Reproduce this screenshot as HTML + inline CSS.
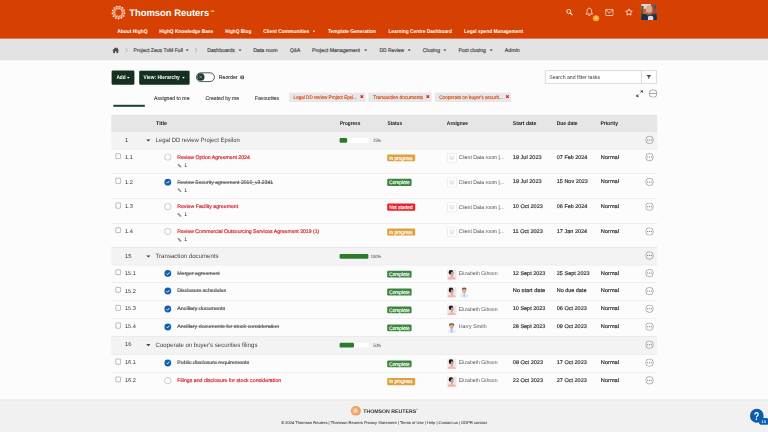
<!DOCTYPE html>
<html lang="en"><head><meta charset="utf-8"><title>Tasks - Project Zeus</title>
<style>
html,body{margin:0;padding:0;width:768px;height:432px;overflow:hidden;background:#FCFCFC;}
#pg{position:absolute;left:0;top:0;width:1920px;height:1080px;transform:scale(0.4);transform-origin:0 0;font-family:"Liberation Sans", sans-serif;overflow:hidden;text-rendering:geometricPrecision;}
#pg div,#pg span,#pg svg{position:absolute;box-sizing:border-box;}
#pg span{white-space:nowrap;}
#pg s{text-decoration:line-through;}
</style></head><body><div id="pg">
<div style="left:0.0px;top:0.0px;width:1920.0px;height:97.25px;background:#D64000;"></div>
<svg width="1920" height="1080" style="left:0;top:0;" fill="#fff"><circle cx="296.25" cy="31.25" r="11.65" fill="none" stroke="#fff" stroke-width="8.82" opacity="0.38"/><circle cx="311.92" cy="32.82" r="1.8"/><circle cx="309.4" cy="39.93" r="1.8"/><circle cx="303.86" cy="45.04" r="1.8"/><circle cx="296.58" cy="47.0" r="1.8"/><circle cx="289.22" cy="45.35" r="1.8"/><circle cx="283.48" cy="40.47" r="1.8"/><circle cx="280.66" cy="33.47" r="1.8"/><circle cx="281.41" cy="25.97" r="1.8"/><circle cx="285.56" cy="19.68" r="1.8"/><circle cx="292.16" cy="16.04" r="1.8"/><circle cx="299.7" cy="15.88" r="1.8"/><circle cx="306.45" cy="19.25" r="1.8"/><circle cx="310.86" cy="25.36" r="1.8"/><circle cx="306.78" cy="34.51" r="1.25"/><circle cx="303.35" cy="39.69" r="1.25"/><circle cx="297.66" cy="42.18" r="1.25"/><circle cx="291.53" cy="41.21" r="1.25"/><circle cx="286.89" cy="37.08" r="1.25"/><circle cx="285.23" cy="31.09" r="1.25"/><circle cx="287.06" cy="25.16" r="1.25"/><circle cx="291.81" cy="21.16" r="1.25"/><circle cx="297.98" cy="20.36" r="1.25"/><circle cx="303.59" cy="23.02" r="1.25"/><circle cx="306.87" cy="28.3" r="1.25"/></svg>
<span style="left:323.25px;top:18.85px;font-size:24.0px;line-height:28.8px;font-weight:700;color:#fff;transform:scaleX(0.9802);transform-origin:0 50%;">Thomson Reuters</span>
<span style="left:526.25px;top:27.2px;font-size:5.5px;line-height:6.6px;font-weight:700;color:#fff;transform:scaleX(1.1316);transform-origin:0 50%;">TM</span>
<span style="left:293.0px;top:69.8px;font-size:13.25px;line-height:15.9px;font-weight:700;color:#fff;transform:scaleX(0.9273);transform-origin:0 50%;">About HighQ</span>
<span style="left:398.25px;top:69.8px;font-size:13.25px;line-height:15.9px;font-weight:700;color:#fff;transform:scaleX(0.9033);transform-origin:0 50%;">HighQ Knowledge Base</span>
<span style="left:562.5px;top:69.8px;font-size:13.25px;line-height:15.9px;font-weight:700;color:#fff;transform:scaleX(0.8988);transform-origin:0 50%;">HighQ Blog</span>
<span style="left:658.0px;top:69.8px;font-size:13.25px;line-height:15.9px;font-weight:700;color:#fff;transform:scaleX(0.9243);transform-origin:0 50%;">Client Communities</span>
<span style="left:819.5px;top:69.8px;font-size:13.25px;line-height:15.9px;font-weight:700;color:#fff;transform:scaleX(0.9173);transform-origin:0 50%;">Template Generation</span>
<span style="left:971.25px;top:69.8px;font-size:13.25px;line-height:15.9px;font-weight:700;color:#fff;transform:scaleX(0.9097);transform-origin:0 50%;">Learning Centre Dashboard</span>
<span style="left:1160.0px;top:69.8px;font-size:13.25px;line-height:15.9px;font-weight:700;color:#fff;transform:scaleX(0.9106);transform-origin:0 50%;">Legal spend Management</span>
<svg style="left:781.25px;top:75.75px;" width="8.0" height="5.0" viewBox="0 0 10 6"><path d="M0 0H10L5 6Z" fill="#fff"/></svg>
<svg style="left:1414.5px;top:21.5px;" width="17.5" height="17.0" viewBox="0 0 20 20"><circle cx="7.8" cy="7.8" r="5.9" fill="none" stroke="#fff" stroke-width="2.5"/><path d="M12.6 12.600L18 18" stroke="#fff" stroke-width="3.4" stroke-linecap="round"/></svg>
<svg style="left:1462.5px;top:18.0px;" width="20.5" height="23.0" viewBox="0 0 20 22"><path d="M10 2.2C6.3 2.2 4.6 5 4.6 8.6C4.6 13 3.4 14.6 1.6 16.4H18.4C16.6 14.6 15.4 13 15.4 8.6C15.4 5 13.7 2.2 10 2.2Z" fill="none" stroke="#fff" stroke-width="1.7" stroke-linejoin="round"/><path d="M7.8 18.4C8 19.8 9 20.4 10 20.4C11 20.4 12 19.8 12.2 18.4" fill="none" stroke="#fff" stroke-width="1.6"/><circle cx="10" cy="1.6" r="1.1" fill="#fff"/></svg>
<div style="left:1482.0px;top:37.5px;width:15.5px;height:15.5px;background:#F2A62E;border-radius:50%;"></div>
<span style="left:1488.0px;top:39.9px;font-size:8.5px;line-height:10.2px;font-weight:700;color:#fff;">3</span>
<svg style="left:1512.5px;top:21.5px;" width="21.0" height="18.0" viewBox="0 0 24 20"><rect x="1.2" y="1.2" width="21.6" height="17.6" rx="1.5" fill="none" stroke="#fff" stroke-width="2"/><path d="M1.5 2.5L12 11.5L22.5 2.5" fill="none" stroke="#fff" stroke-width="2"/></svg>
<svg style="left:1562.25px;top:19.75px;" width="21.0" height="20.5" viewBox="0 0 24 24"><path d="M12 2.5L14.9 8.7L21.6 9.5L16.7 14.1L18 20.8L12 17.5L6 20.8L7.3 14.1L2.4 9.5L9.1 8.7Z" fill="none" stroke="#fff" stroke-width="2.2" stroke-linejoin="round"/></svg>
<div style="left:1603.0px;top:10.25px;width:39.25px;height:39.5px;overflow:hidden;background:#8f5f4c;border-radius:1.25px;"><div style="left:0;top:0;width:62%;height:34%;background:#d6dadd;"></div><div style="left:0;top:12%;width:16%;height:56%;background:#4e5a42;"></div><div style="left:13%;top:30%;width:24%;height:38%;background:#cf632c;"></div><div style="left:70%;top:0;width:30%;height:68%;background:#9c4c36;"></div><div style="left:84%;top:8%;width:10%;height:22%;background:#5d4a48;"></div><div style="left:0%;top:62%;width:100%;height:40%;background:#27303f;"></div><div style="left:31%;top:7%;width:40%;height:68%;background:#d9ab92;border-radius:46% 46% 48% 48%;"></div><div style="left:35%;top:50%;width:33%;height:27%;background:#7a5646;border-radius:20% 20% 50% 50%;"></div><div style="left:42%;top:50%;width:18%;height:9%;background:#c99a84;"></div><div style="left:0%;top:72%;width:100%;height:32%;background:#1f2d4a;border-radius:45% 45% 0 0;"></div><div style="left:44%;top:76%;width:32%;height:26%;background:#d3dbe7;border-radius:30% 30% 0 0;"></div></div>
<div style="left:0.0px;top:97.25px;width:1920.0px;height:53.5px;background:#E3E3E3;"></div>
<svg style="left:279.5px;top:117.5px;" width="18.5" height="15.5" viewBox="0 0 22 19"><path d="M11 0.5L0.3 10.2H3.2V18.5H8.8V12.5H13.2V18.5H18.8V10.2H21.7L17.6 6.5V1.8H15V4.1Z" fill="#4a4a4a"/></svg>
<svg style="left:312.0px;top:117.5px;" width="7.5" height="14.5" viewBox="0 0 8 16"><path d="M1 1L7 8L1 15" fill="none" stroke="#8e8e8e" stroke-width="1.6"/></svg>
<span style="left:334.0px;top:117.05px;font-size:13.25px;line-height:15.9px;font-weight:400;color:#484848;-webkit-text-stroke:0.46px #484848;transform:scaleX(0.9583);transform-origin:0 50%;">Project Zeus TxM Full</span>
<svg style="left:463.75px;top:123.25px;" width="8.25" height="5.25" viewBox="0 0 10 6"><path d="M0 0H10L5 6Z" fill="#484848"/></svg>
<svg style="left:486.25px;top:117.5px;" width="7.5" height="14.5" viewBox="0 0 8 16"><path d="M1 1L7 8L1 15" fill="none" stroke="#8e8e8e" stroke-width="1.6"/></svg>
<span style="left:517.5px;top:117.05px;font-size:13.25px;line-height:15.9px;font-weight:400;color:#484848;-webkit-text-stroke:0.46px #484848;transform:scaleX(0.9692);transform-origin:0 50%;">Dashboards</span>
<svg style="left:595.5px;top:123.25px;" width="8.25" height="5.25" viewBox="0 0 10 6"><path d="M0 0H10L5 6Z" fill="#484848"/></svg>
<span style="left:633.0px;top:117.05px;font-size:13.25px;line-height:15.9px;font-weight:400;color:#484848;-webkit-text-stroke:0.46px #484848;transform:scaleX(0.9901);transform-origin:0 50%;">Data room</span>
<span style="left:724.5px;top:117.05px;font-size:13.25px;line-height:15.9px;font-weight:400;color:#484848;-webkit-text-stroke:0.46px #484848;transform:scaleX(0.9112);transform-origin:0 50%;">Q&amp;A</span>
<span style="left:780.0px;top:117.05px;font-size:13.25px;line-height:15.9px;font-weight:400;color:#484848;-webkit-text-stroke:0.46px #484848;transform:scaleX(0.9815);transform-origin:0 50%;">Project Management</span>
<svg style="left:910.25px;top:123.25px;" width="8.25" height="5.25" viewBox="0 0 10 6"><path d="M0 0H10L5 6Z" fill="#484848"/></svg>
<span style="left:948.75px;top:117.05px;font-size:13.25px;line-height:15.9px;font-weight:400;color:#484848;-webkit-text-stroke:0.46px #484848;transform:scaleX(0.9205);transform-origin:0 50%;">DD Review</span>
<svg style="left:1018.75px;top:123.25px;" width="8.25" height="5.25" viewBox="0 0 10 6"><path d="M0 0H10L5 6Z" fill="#484848"/></svg>
<span style="left:1056.75px;top:117.05px;font-size:13.25px;line-height:15.9px;font-weight:400;color:#484848;-webkit-text-stroke:0.46px #484848;transform:scaleX(0.9728);transform-origin:0 50%;">Closing</span>
<svg style="left:1108.0px;top:123.25px;" width="8.25" height="5.25" viewBox="0 0 10 6"><path d="M0 0H10L5 6Z" fill="#484848"/></svg>
<span style="left:1146.25px;top:117.05px;font-size:13.25px;line-height:15.9px;font-weight:400;color:#484848;-webkit-text-stroke:0.46px #484848;transform:scaleX(0.9587);transform-origin:0 50%;">Post closing</span>
<svg style="left:1223.5px;top:123.25px;" width="8.25" height="5.25" viewBox="0 0 10 6"><path d="M0 0H10L5 6Z" fill="#484848"/></svg>
<span style="left:1262.0px;top:117.05px;font-size:13.25px;line-height:15.9px;font-weight:400;color:#484848;-webkit-text-stroke:0.46px #484848;transform:scaleX(0.9983);transform-origin:0 50%;">Admin</span>
<div style="left:278.75px;top:175.62px;width:57.5px;height:36.25px;background:#14301F;border-radius:3.25px;"></div>
<span style="left:290.5px;top:185.75px;font-size:13.75px;line-height:16.5px;font-weight:700;color:#fff;transform:scaleX(0.8697);transform-origin:0 50%;">Add</span>
<svg style="left:317.0px;top:192.25px;" width="7.5" height="4.75" viewBox="0 0 10 6"><path d="M0 0H10L5 6Z" fill="#fff"/></svg>
<div style="left:347.5px;top:175.62px;width:126.0px;height:36.25px;background:#14301F;border-radius:3.25px;"></div>
<span style="left:359.0px;top:185.75px;font-size:13.75px;line-height:16.5px;font-weight:700;color:#fff;transform:scaleX(0.8792);transform-origin:0 50%;">View: Hierarchy</span>
<svg style="left:454.75px;top:192.25px;" width="7.5" height="4.75" viewBox="0 0 10 6"><path d="M0 0H10L5 6Z" fill="#fff"/></svg>
<div style="left:490.0px;top:180.5px;width:46.5px;height:24.25px;border:2.75px solid #1c3a2a;border-radius:12.5px;background:#fff;"></div>
<div style="left:492.5px;top:183.25px;width:18.75px;height:18.75px;background:#1c3a2a;border-radius:50%;"></div>
<svg style="left:496.38px;top:187.12px;" width="11.0" height="11.0" viewBox="0 0 10 10"><path d="M1.5 1.5L8.5 8.5M8.5 1.5L1.5 8.5" stroke="#b9c7bf" stroke-width="1.5"/></svg>
<span style="left:546.88px;top:184.85px;font-size:14.0px;line-height:16.8px;font-weight:400;color:#2a2a2a;-webkit-text-stroke:0.25px #2a2a2a;transform:scaleX(0.929);transform-origin:0 50%;">Reorder</span>
<svg style="left:599.75px;top:188.0px;" width="11.0" height="11.0" viewBox="0 0 10 10"><circle cx="5" cy="5" r="4.7" fill="#5a5a5a"/><text x="5" y="8" font-size="8" font-weight="700" text-anchor="middle" fill="#fff" font-family="Liberation Sans, sans-serif">?</text></svg>
<div style="left:1363.25px;top:175.75px;width:278.5px;height:33.5px;border:1.38px solid #a6a6a6;border-radius:1.5px;background:#fff;"></div>
<div style="left:1602.75px;top:175.75px;width:1.38px;height:33.5px;background:#a6a6a6;"></div>
<span style="left:1372.5px;top:185.75px;font-size:13.75px;line-height:16.5px;font-weight:400;color:#3c3c3c;transform:scaleX(0.9372);transform-origin:0 50%;">Search and filter tasks</span>
<svg style="left:1615.75px;top:186.25px;" width="12.0" height="12.5" viewBox="0 0 12 12"><path d="M0.5 1H11.5V2.6L7.4 6V11.5L4.6 10V6L0.5 2.6Z" fill="#4a4a4a"/></svg>
<span style="left:293.75px;top:237.15px;font-size:13.5px;line-height:16.2px;font-weight:400;color:#f7f7f7;transform:scaleX(0.9947);transform-origin:0 50%;">All tasks</span>
<div style="left:283.25px;top:262.0px;width:78.5px;height:4.5px;background:#1d4231;"></div>
<span style="left:385.0px;top:237.0px;font-size:13.75px;line-height:16.5px;font-weight:400;color:#333;-webkit-text-stroke:0.25px #333;transform:scaleX(0.9364);transform-origin:0 50%;">Assigned to me</span>
<span style="left:514.25px;top:237.0px;font-size:13.75px;line-height:16.5px;font-weight:400;color:#333;-webkit-text-stroke:0.25px #333;transform:scaleX(0.9258);transform-origin:0 50%;">Created by me</span>
<span style="left:637.0px;top:237.0px;font-size:13.75px;line-height:16.5px;font-weight:400;color:#333;-webkit-text-stroke:0.25px #333;transform:scaleX(0.9462);transform-origin:0 50%;">Favourites</span>
<div style="left:723.25px;top:230.75px;width:190.5px;height:23.75px;background:#E7E7E7;border-radius:2.5px;"></div>
<span style="left:733.75px;top:237.0px;font-size:12.5px;line-height:15.0px;font-weight:400;color:#D6501E;-webkit-text-stroke:0.44px #D6501E;transform:scaleX(0.9185);transform-origin:0 50%;">Legal DD review Project Epsi...</span>
<svg style="left:899.75px;top:237.0px;" width="9.25" height="9.25" viewBox="0 0 10 10"><path d="M1.5 1.5L8.5 8.5M8.5 1.5L1.5 8.5" stroke="#DC1F26" stroke-width="3.2"/></svg>
<div style="left:921.0px;top:230.75px;width:158.0px;height:23.75px;background:#E7E7E7;border-radius:2.5px;"></div>
<span style="left:932.75px;top:237.0px;font-size:12.5px;line-height:15.0px;font-weight:400;color:#D6501E;-webkit-text-stroke:0.44px #D6501E;transform:scaleX(0.9655);transform-origin:0 50%;">Transaction documents</span>
<svg style="left:1064.5px;top:237.0px;" width="9.25" height="9.25" viewBox="0 0 10 10"><path d="M1.5 1.5L8.5 8.5M8.5 1.5L1.5 8.5" stroke="#DC1F26" stroke-width="3.2"/></svg>
<div style="left:1086.75px;top:230.75px;width:191.25px;height:23.75px;background:#E7E7E7;border-radius:2.5px;"></div>
<span style="left:1097.5px;top:237.0px;font-size:12.5px;line-height:15.0px;font-weight:400;color:#D6501E;-webkit-text-stroke:0.44px #D6501E;transform:scaleX(0.9347);transform-origin:0 50%;">Cooperate on buyer&#x27;s securit...</span>
<svg style="left:1263.5px;top:237.0px;" width="9.25" height="9.25" viewBox="0 0 10 10"><path d="M1.5 1.5L8.5 8.5M8.5 1.5L1.5 8.5" stroke="#DC1F26" stroke-width="3.2"/></svg>
<svg style="left:1590.0px;top:225.0px;" width="18.0" height="18.0" viewBox="0 0 18 18"><path d="M16 2L11 7M2 16L7 11" fill="none" stroke="#333" stroke-width="1.8"/><path d="M17 1V7.6L10.4 1ZM1 17V10.4L7.600 17Z" fill="#333"/></svg>
<svg style="left:1621.75px;top:222.75px;" width="21.5" height="21.5" viewBox="0 0 20 20"><circle cx="10" cy="10" r="9.1" fill="none" stroke="#5e5e5e" stroke-width="1.25"/><path d="M1.5 10H18.5" stroke="#5e5e5e" stroke-width="1.3"/></svg>
<div style="left:278.25px;top:286.75px;width:1364.25px;height:43.0px;background:#E6E6E6;"></div>
<span style="left:389.5px;top:299.75px;font-size:13.75px;line-height:16.5px;font-weight:700;color:#222;transform:scaleX(0.981);transform-origin:0 50%;">Title</span>
<span style="left:849.5px;top:299.75px;font-size:13.75px;line-height:16.5px;font-weight:700;color:#222;transform:scaleX(0.8512);transform-origin:0 50%;">Progress</span>
<span style="left:968.5px;top:299.75px;font-size:13.75px;line-height:16.5px;font-weight:700;color:#222;transform:scaleX(0.8625);transform-origin:0 50%;">Status</span>
<span style="left:1117.25px;top:299.75px;font-size:13.75px;line-height:16.5px;font-weight:700;color:#222;transform:scaleX(0.8669);transform-origin:0 50%;">Assignee</span>
<span style="left:1281.5px;top:299.75px;font-size:13.75px;line-height:16.5px;font-weight:700;color:#222;transform:scaleX(0.9303);transform-origin:0 50%;">Start date</span>
<span style="left:1392.0px;top:299.75px;font-size:13.75px;line-height:16.5px;font-weight:700;color:#222;transform:scaleX(0.8953);transform-origin:0 50%;">Due date</span>
<span style="left:1501.25px;top:299.75px;font-size:13.75px;line-height:16.5px;font-weight:700;color:#222;transform:scaleX(0.914);transform-origin:0 50%;">Priority</span>
<div style="left:278.25px;top:329.75px;width:1364.25px;height:42.0px;background:#F3F3F3;"></div>
<div style="left:278.25px;top:371.88px;width:1364.25px;height:1.12px;background:#dcdcdc;"></div>
<span style="left:312.5px;top:341.8px;font-size:14.5px;line-height:17.4px;font-weight:400;color:#333;">1</span>
<svg style="left:364.5px;top:347.75px;" width="11.75" height="6.5" viewBox="0 0 10 6"><path d="M0 0H10L5 6Z" fill="#444"/></svg>
<span style="left:389.0px;top:342.08px;font-size:15.5px;line-height:18.6px;font-weight:400;color:#444;transform:scaleX(0.9507);transform-origin:0 50%;">Legal DD review Project Epsilon</span>
<div style="left:849.0px;top:345.12px;width:72.0px;height:11.75px;background:#fff;border-radius:3.25px;"></div>
<div style="left:849.0px;top:345.12px;width:18.72px;height:11.75px;background:#2B7B2C;border-radius:3.25px;"></div>
<span style="left:932.75px;top:344.45px;font-size:11.75px;line-height:14.1px;font-weight:400;color:#3c3c3c;transform:scaleX(0.8393);transform-origin:0 50%;">25%</span>
<svg style="left:1613.25px;top:338.5px;" width="21.5" height="21.5" viewBox="0 0 20 20"><circle cx="10" cy="10" r="8.8" fill="none" stroke="#646464" stroke-width="1.15"/><circle cx="5.8" cy="10" r="1.2" fill="#505050"/><circle cx="10" cy="10" r="1.2" fill="#505050"/><circle cx="14.2" cy="10" r="1.2" fill="#505050"/></svg>
<div style="left:278.25px;top:433.63px;width:1364.25px;height:1.12px;background:#dcdcdc;"></div>
<div style="left:288.5px;top:383.5px;width:13.25px;height:13.25px;border:1.55px solid #5a5a5a;border-radius:1.75px;background:#fff;"></div>
<span style="left:312.5px;top:384.35px;font-size:14.0px;line-height:16.8px;font-weight:400;color:#333;">1.1</span>
<div style="left:410.5px;top:384.25px;width:17.0px;height:17.0px;border:1.38px solid #7c7c7c;border-radius:50%;background:#fff;"></div>
<span style="left:442.5px;top:385.7px;font-size:13.0px;line-height:15.6px;font-weight:400;color:#D6252B;-webkit-text-stroke:0.46px #D6252B;transform:scaleX(0.9888);transform-origin:0 50%;">Review Option Agreement 2024</span>
<svg style="left:443.25px;top:408.5px;" width="11.25" height="10.75" viewBox="0 0 10 10"><path d="M2.2 2.2L7.6 7.6" stroke="#7c7c7c" stroke-width="3.5" stroke-linecap="round"/><path d="M2.6 2.6L7 7" stroke="#d8d8d8" stroke-width="1.0" stroke-linecap="round"/></svg>
<span style="left:460.75px;top:405.7px;font-size:13.0px;line-height:15.6px;font-weight:400;color:#333;">1</span>
<div style="left:968.0px;top:385.5px;width:69.5px;height:17.5px;background:#DFA03E;border-radius:3.0px;"></div>
<span style="left:973.25px;top:387.62px;font-size:12.5px;line-height:15.0px;font-weight:400;color:#fff;-webkit-text-stroke:0.44px #fff;transform:scaleX(0.9395);transform-origin:0 50%;">In progress</span>
<div style="left:1117.75px;top:382.5px;width:23.75px;height:23.5px;border:1.25px solid #d2d2d2;background:#fff;border-radius:1.5px;"><div style="left:24%;top:40%;width:52%;height:38%;background:#e6e6e6;border-radius:40% 40% 30% 30%;"></div><div style="left:20%;top:20%;width:22%;height:26%;background:#e6e6e6;border-radius:50%;"></div><div style="left:58%;top:20%;width:22%;height:26%;background:#e6e6e6;border-radius:50%;"></div></div>
<span style="left:1147.0px;top:385.8px;font-size:13.25px;line-height:15.9px;font-weight:400;color:#4c4c4c;transform:scaleX(0.9633);transform-origin:0 50%;">Client Data room [...</span>
<span style="left:1281.5px;top:384.65px;font-size:13.5px;line-height:16.2px;font-weight:400;color:#333;-webkit-text-stroke:0.47px #333;transform:scaleX(1.0313);transform-origin:0 50%;">19 Jul 2023</span>
<span style="left:1391.5px;top:384.65px;font-size:13.5px;line-height:16.2px;font-weight:400;color:#333;-webkit-text-stroke:0.47px #333;transform:scaleX(1.0091);transform-origin:0 50%;">07 Feb 2024</span>
<span style="left:1501.5px;top:384.65px;font-size:13.5px;line-height:16.2px;font-weight:400;color:#333;-webkit-text-stroke:0.47px #333;transform:scaleX(1.0456);transform-origin:0 50%;">Normal</span>
<svg style="left:1613.25px;top:382.0px;" width="21.5" height="21.5" viewBox="0 0 20 20"><circle cx="10" cy="10" r="8.8" fill="none" stroke="#646464" stroke-width="1.15"/><circle cx="5.8" cy="10" r="1.2" fill="#505050"/><circle cx="10" cy="10" r="1.2" fill="#505050"/><circle cx="14.2" cy="10" r="1.2" fill="#505050"/></svg>
<div style="left:278.25px;top:495.62px;width:1364.25px;height:1.12px;background:#dcdcdc;"></div>
<div style="left:288.5px;top:445.25px;width:13.25px;height:13.25px;border:1.55px solid #5a5a5a;border-radius:1.75px;background:#fff;"></div>
<span style="left:312.5px;top:446.1px;font-size:14.0px;line-height:16.8px;font-weight:400;color:#333;">1.2</span>
<div style="left:410.75px;top:446.5px;width:17.0px;height:17.0px;background:#1560AE;border-radius:50%;"></div>
<svg style="left:413.5px;top:449.25px;" width="11.5" height="11.5" viewBox="0 0 10 10"><path d="M1.8 5.2L4.1 7.500L8.4 2.800" fill="none" stroke="#fff" stroke-width="1.900"/></svg>
<span style="left:442.5px;top:447.45px;font-size:13.0px;line-height:15.6px;font-weight:400;color:#5a5a5a;text-decoration:line-through #505050;text-decoration-thickness:1.1px;-webkit-text-stroke:0.34px #5a5a5a;transform:scaleX(0.9797);transform-origin:0 50%;">Review Security agreement 2010_v3.2341</span>
<svg style="left:443.25px;top:470.25px;" width="11.25" height="10.75" viewBox="0 0 10 10"><path d="M2.2 2.2L7.6 7.6" stroke="#7c7c7c" stroke-width="3.5" stroke-linecap="round"/><path d="M2.6 2.6L7 7" stroke="#d8d8d8" stroke-width="1.0" stroke-linecap="round"/></svg>
<span style="left:460.75px;top:467.45px;font-size:13.0px;line-height:15.6px;font-weight:400;color:#333;">1</span>
<div style="left:968.0px;top:447.25px;width:61.25px;height:17.5px;background:#3B873D;border-radius:3.0px;"></div>
<span style="left:973.25px;top:449.38px;font-size:12.5px;line-height:15.0px;font-weight:400;color:#fff;-webkit-text-stroke:0.44px #fff;transform:scaleX(0.9533);transform-origin:0 50%;">Complete</span>
<div style="left:1117.75px;top:444.25px;width:23.75px;height:23.5px;border:1.25px solid #d2d2d2;background:#fff;border-radius:1.5px;"><div style="left:24%;top:40%;width:52%;height:38%;background:#e6e6e6;border-radius:40% 40% 30% 30%;"></div><div style="left:20%;top:20%;width:22%;height:26%;background:#e6e6e6;border-radius:50%;"></div><div style="left:58%;top:20%;width:22%;height:26%;background:#e6e6e6;border-radius:50%;"></div></div>
<span style="left:1147.0px;top:447.55px;font-size:13.25px;line-height:15.9px;font-weight:400;color:#4c4c4c;transform:scaleX(0.9633);transform-origin:0 50%;">Client Data room [...</span>
<span style="left:1281.5px;top:446.4px;font-size:13.5px;line-height:16.2px;font-weight:400;color:#333;-webkit-text-stroke:0.47px #333;transform:scaleX(1.0313);transform-origin:0 50%;">19 Jul 2023</span>
<span style="left:1391.5px;top:446.4px;font-size:13.5px;line-height:16.2px;font-weight:400;color:#333;-webkit-text-stroke:0.47px #333;transform:scaleX(1.0122);transform-origin:0 50%;">15 Nov 2023</span>
<span style="left:1501.5px;top:446.4px;font-size:13.5px;line-height:16.2px;font-weight:400;color:#333;-webkit-text-stroke:0.47px #333;transform:scaleX(1.0456);transform-origin:0 50%;">Normal</span>
<svg style="left:1613.25px;top:443.75px;" width="21.5" height="21.5" viewBox="0 0 20 20"><circle cx="10" cy="10" r="8.8" fill="none" stroke="#646464" stroke-width="1.15"/><circle cx="5.8" cy="10" r="1.2" fill="#505050"/><circle cx="10" cy="10" r="1.2" fill="#505050"/><circle cx="14.2" cy="10" r="1.2" fill="#505050"/></svg>
<div style="left:278.25px;top:557.5px;width:1364.25px;height:1.12px;background:#dcdcdc;"></div>
<div style="left:288.5px;top:507.25px;width:13.25px;height:13.25px;border:1.55px solid #5a5a5a;border-radius:1.75px;background:#fff;"></div>
<span style="left:312.5px;top:508.1px;font-size:14.0px;line-height:16.8px;font-weight:400;color:#333;">1.3</span>
<div style="left:410.5px;top:508.0px;width:17.0px;height:17.0px;border:1.38px solid #7c7c7c;border-radius:50%;background:#fff;"></div>
<span style="left:442.5px;top:509.45px;font-size:13.0px;line-height:15.6px;font-weight:400;color:#D6252B;-webkit-text-stroke:0.46px #D6252B;transform:scaleX(1.0003);transform-origin:0 50%;">Review Facility agreement</span>
<svg style="left:443.25px;top:532.25px;" width="11.25" height="10.75" viewBox="0 0 10 10"><path d="M2.2 2.2L7.6 7.6" stroke="#7c7c7c" stroke-width="3.5" stroke-linecap="round"/><path d="M2.6 2.6L7 7" stroke="#d8d8d8" stroke-width="1.0" stroke-linecap="round"/></svg>
<span style="left:460.75px;top:529.45px;font-size:13.0px;line-height:15.6px;font-weight:400;color:#333;">1</span>
<div style="left:968.0px;top:509.25px;width:69.5px;height:17.5px;background:#EC1F2A;border-radius:3.0px;"></div>
<span style="left:973.25px;top:511.37px;font-size:12.5px;line-height:15.0px;font-weight:400;color:#fff;-webkit-text-stroke:0.44px #fff;transform:scaleX(0.9609);transform-origin:0 50%;">Not started</span>
<div style="left:1117.75px;top:506.25px;width:23.75px;height:23.5px;border:1.25px solid #d2d2d2;background:#fff;border-radius:1.5px;"><div style="left:24%;top:40%;width:52%;height:38%;background:#e6e6e6;border-radius:40% 40% 30% 30%;"></div><div style="left:20%;top:20%;width:22%;height:26%;background:#e6e6e6;border-radius:50%;"></div><div style="left:58%;top:20%;width:22%;height:26%;background:#e6e6e6;border-radius:50%;"></div></div>
<span style="left:1147.0px;top:509.55px;font-size:13.25px;line-height:15.9px;font-weight:400;color:#4c4c4c;transform:scaleX(0.9633);transform-origin:0 50%;">Client Data room [...</span>
<span style="left:1281.5px;top:508.4px;font-size:13.5px;line-height:16.2px;font-weight:400;color:#333;-webkit-text-stroke:0.47px #333;transform:scaleX(1.0195);transform-origin:0 50%;">10 Oct 2023</span>
<span style="left:1391.5px;top:508.4px;font-size:13.5px;line-height:16.2px;font-weight:400;color:#333;-webkit-text-stroke:0.47px #333;transform:scaleX(1.0091);transform-origin:0 50%;">06 Feb 2024</span>
<span style="left:1501.5px;top:508.4px;font-size:13.5px;line-height:16.2px;font-weight:400;color:#333;-webkit-text-stroke:0.47px #333;transform:scaleX(1.0456);transform-origin:0 50%;">Normal</span>
<svg style="left:1613.25px;top:505.75px;" width="21.5" height="21.5" viewBox="0 0 20 20"><circle cx="10" cy="10" r="8.8" fill="none" stroke="#646464" stroke-width="1.15"/><circle cx="5.8" cy="10" r="1.2" fill="#505050"/><circle cx="10" cy="10" r="1.2" fill="#505050"/><circle cx="14.2" cy="10" r="1.2" fill="#505050"/></svg>
<div style="left:278.25px;top:619.38px;width:1364.25px;height:1.12px;background:#dcdcdc;"></div>
<div style="left:288.5px;top:569.12px;width:13.25px;height:13.25px;border:1.55px solid #5a5a5a;border-radius:1.75px;background:#fff;"></div>
<span style="left:312.5px;top:569.97px;font-size:14.0px;line-height:16.8px;font-weight:400;color:#333;">1.4</span>
<div style="left:410.5px;top:569.88px;width:17.0px;height:17.0px;border:1.38px solid #7c7c7c;border-radius:50%;background:#fff;"></div>
<span style="left:442.5px;top:571.33px;font-size:13.0px;line-height:15.6px;font-weight:400;color:#D6252B;-webkit-text-stroke:0.46px #D6252B;transform:scaleX(0.9827);transform-origin:0 50%;">Review Commercial Outsourcing Services Agreement 2019 (1)</span>
<svg style="left:443.25px;top:594.12px;" width="11.25" height="10.75" viewBox="0 0 10 10"><path d="M2.2 2.2L7.6 7.6" stroke="#7c7c7c" stroke-width="3.5" stroke-linecap="round"/><path d="M2.6 2.6L7 7" stroke="#d8d8d8" stroke-width="1.0" stroke-linecap="round"/></svg>
<span style="left:460.75px;top:591.33px;font-size:13.0px;line-height:15.6px;font-weight:400;color:#333;">1</span>
<div style="left:968.0px;top:571.12px;width:69.5px;height:17.5px;background:#DFA03E;border-radius:3.0px;"></div>
<span style="left:973.25px;top:573.25px;font-size:12.5px;line-height:15.0px;font-weight:400;color:#fff;-webkit-text-stroke:0.44px #fff;transform:scaleX(0.9395);transform-origin:0 50%;">In progress</span>
<div style="left:1117.75px;top:568.12px;width:23.75px;height:23.5px;border:1.25px solid #d2d2d2;background:#fff;border-radius:1.5px;"><div style="left:24%;top:40%;width:52%;height:38%;background:#e6e6e6;border-radius:40% 40% 30% 30%;"></div><div style="left:20%;top:20%;width:22%;height:26%;background:#e6e6e6;border-radius:50%;"></div><div style="left:58%;top:20%;width:22%;height:26%;background:#e6e6e6;border-radius:50%;"></div></div>
<span style="left:1147.0px;top:571.42px;font-size:13.25px;line-height:15.9px;font-weight:400;color:#4c4c4c;transform:scaleX(0.9633);transform-origin:0 50%;">Client Data room [...</span>
<span style="left:1281.5px;top:570.27px;font-size:13.5px;line-height:16.2px;font-weight:400;color:#333;-webkit-text-stroke:0.47px #333;transform:scaleX(1.0336);transform-origin:0 50%;">11 Oct 2023</span>
<span style="left:1391.5px;top:570.27px;font-size:13.5px;line-height:16.2px;font-weight:400;color:#333;-webkit-text-stroke:0.47px #333;transform:scaleX(1.0225);transform-origin:0 50%;">17 Jan 2024</span>
<span style="left:1501.5px;top:570.27px;font-size:13.5px;line-height:16.2px;font-weight:400;color:#333;-webkit-text-stroke:0.47px #333;transform:scaleX(1.0456);transform-origin:0 50%;">Normal</span>
<svg style="left:1613.25px;top:567.62px;" width="21.5" height="21.5" viewBox="0 0 20 20"><circle cx="10" cy="10" r="8.8" fill="none" stroke="#646464" stroke-width="1.15"/><circle cx="5.8" cy="10" r="1.2" fill="#505050"/><circle cx="10" cy="10" r="1.2" fill="#505050"/><circle cx="14.2" cy="10" r="1.2" fill="#505050"/></svg>
<div style="left:278.25px;top:619.25px;width:1364.25px;height:42.5px;background:#F3F3F3;"></div>
<div style="left:278.25px;top:661.88px;width:1364.25px;height:1.12px;background:#dcdcdc;"></div>
<div style="left:278.25px;top:619.38px;width:1364.25px;height:1.12px;background:#dcdcdc;"></div>
<span style="left:312.5px;top:631.55px;font-size:14.5px;line-height:17.4px;font-weight:400;color:#333;">15</span>
<svg style="left:364.5px;top:637.5px;" width="11.75" height="6.5" viewBox="0 0 10 6"><path d="M0 0H10L5 6Z" fill="#444"/></svg>
<span style="left:389.0px;top:631.82px;font-size:15.5px;line-height:18.6px;font-weight:400;color:#444;transform:scaleX(0.981);transform-origin:0 50%;">Transaction documents</span>
<div style="left:849.0px;top:634.87px;width:72.0px;height:11.75px;background:#fff;border-radius:3.25px;"></div>
<div style="left:849.0px;top:634.87px;width:72.0px;height:11.75px;background:#2B7B2C;border-radius:3.25px;"></div>
<span style="left:926.75px;top:634.2px;font-size:11.75px;line-height:14.1px;font-weight:400;color:#3c3c3c;transform:scaleX(0.8565);transform-origin:0 50%;">100%</span>
<svg style="left:1613.25px;top:628.25px;" width="21.5" height="21.5" viewBox="0 0 20 20"><circle cx="10" cy="10" r="8.8" fill="none" stroke="#646464" stroke-width="1.15"/><circle cx="5.8" cy="10" r="1.2" fill="#505050"/><circle cx="10" cy="10" r="1.2" fill="#505050"/><circle cx="14.2" cy="10" r="1.2" fill="#505050"/></svg>
<div style="left:278.25px;top:706.38px;width:1364.25px;height:1.12px;background:#dcdcdc;"></div>
<div style="left:288.5px;top:673.5px;width:13.25px;height:13.25px;border:1.55px solid #5a5a5a;border-radius:1.75px;background:#fff;"></div>
<span style="left:312.5px;top:674.35px;font-size:14.0px;line-height:16.8px;font-weight:400;color:#333;">15.1</span>
<div style="left:410.75px;top:674.75px;width:17.0px;height:17.0px;background:#1560AE;border-radius:50%;"></div>
<svg style="left:413.5px;top:677.5px;" width="11.5" height="11.5" viewBox="0 0 10 10"><path d="M1.8 5.2L4.1 7.500L8.4 2.800" fill="none" stroke="#fff" stroke-width="1.900"/></svg>
<span style="left:442.5px;top:674.7px;font-size:13.0px;line-height:15.6px;font-weight:400;color:#5a5a5a;text-decoration:line-through #505050;text-decoration-thickness:1.1px;-webkit-text-stroke:0.34px #5a5a5a;transform:scaleX(0.9958);transform-origin:0 50%;">Merger agreement</span>
<div style="left:968.0px;top:676.75px;width:61.25px;height:17.5px;background:#3B873D;border-radius:3.0px;"></div>
<span style="left:973.25px;top:678.88px;font-size:12.5px;line-height:15.0px;font-weight:400;color:#fff;-webkit-text-stroke:0.44px #fff;transform:scaleX(0.9533);transform-origin:0 50%;">Complete</span>
<div style="left:1117.75px;top:673.5px;width:23.25px;height:25.0px;overflow:hidden;background:#eae8ed;"><div style="left:20%;top:4%;width:44%;height:46%;background:#1f1513;border-radius:48%;"></div><div style="left:40%;top:22%;width:32%;height:38%;background:#cf9f86;border-radius:40% 50% 50% 45%;"></div><div style="left:40%;top:52%;width:20%;height:26%;background:#d4a78e;"></div><div style="left:6%;top:74%;width:86%;height:40%;background:#f2b5a8;border-radius:50% 50% 0 0;"></div></div>
<span style="left:1147.0px;top:675.55px;font-size:13.25px;line-height:15.9px;font-weight:400;color:#555;transform:scaleX(0.9658);transform-origin:0 50%;">Elizabeth Gibson</span>
<span style="left:1281.5px;top:674.65px;font-size:13.5px;line-height:16.2px;font-weight:400;color:#333;-webkit-text-stroke:0.47px #333;transform:scaleX(1.0146);transform-origin:0 50%;">12 Sept 2023</span>
<span style="left:1391.5px;top:674.65px;font-size:13.5px;line-height:16.2px;font-weight:400;color:#333;-webkit-text-stroke:0.47px #333;transform:scaleX(1.0208);transform-origin:0 50%;">25 Sept 2023</span>
<span style="left:1501.5px;top:674.65px;font-size:13.5px;line-height:16.2px;font-weight:400;color:#333;-webkit-text-stroke:0.47px #333;transform:scaleX(1.0456);transform-origin:0 50%;">Normal</span>
<svg style="left:1613.25px;top:672.0px;" width="21.5" height="21.5" viewBox="0 0 20 20"><circle cx="10" cy="10" r="8.8" fill="none" stroke="#646464" stroke-width="1.15"/><circle cx="5.8" cy="10" r="1.2" fill="#505050"/><circle cx="10" cy="10" r="1.2" fill="#505050"/><circle cx="14.2" cy="10" r="1.2" fill="#505050"/></svg>
<div style="left:278.25px;top:750.88px;width:1364.25px;height:1.12px;background:#dcdcdc;"></div>
<div style="left:288.5px;top:718.0px;width:13.25px;height:13.25px;border:1.55px solid #5a5a5a;border-radius:1.75px;background:#fff;"></div>
<span style="left:312.5px;top:718.85px;font-size:14.0px;line-height:16.8px;font-weight:400;color:#333;">15.2</span>
<div style="left:410.75px;top:719.25px;width:17.0px;height:17.0px;background:#1560AE;border-radius:50%;"></div>
<svg style="left:413.5px;top:722.0px;" width="11.5" height="11.5" viewBox="0 0 10 10"><path d="M1.8 5.2L4.1 7.500L8.4 2.800" fill="none" stroke="#fff" stroke-width="1.900"/></svg>
<span style="left:442.5px;top:719.2px;font-size:13.0px;line-height:15.6px;font-weight:400;color:#5a5a5a;text-decoration:line-through #505050;text-decoration-thickness:1.1px;-webkit-text-stroke:0.34px #5a5a5a;transform:scaleX(0.9931);transform-origin:0 50%;">Disclosure schedules</span>
<div style="left:968.0px;top:721.25px;width:61.25px;height:17.5px;background:#3B873D;border-radius:3.0px;"></div>
<span style="left:973.25px;top:723.37px;font-size:12.5px;line-height:15.0px;font-weight:400;color:#fff;-webkit-text-stroke:0.44px #fff;transform:scaleX(0.9533);transform-origin:0 50%;">Complete</span>
<div style="left:1117.75px;top:718.0px;width:23.25px;height:25.0px;overflow:hidden;background:#eae8ed;"><div style="left:20%;top:4%;width:44%;height:46%;background:#1f1513;border-radius:48%;"></div><div style="left:40%;top:22%;width:32%;height:38%;background:#cf9f86;border-radius:40% 50% 50% 45%;"></div><div style="left:40%;top:52%;width:20%;height:26%;background:#d4a78e;"></div><div style="left:6%;top:74%;width:86%;height:40%;background:#f2b5a8;border-radius:50% 50% 0 0;"></div></div>
<div style="left:1149.25px;top:718.0px;width:22.5px;height:25.0px;overflow:hidden;background:#fbfbfc;"><div style="left:24%;top:3%;width:52%;height:28%;background:#6b4c38;border-radius:50% 50% 20% 20%;"></div><div style="left:28%;top:14%;width:44%;height:44%;background:#ddab8d;border-radius:42%;"></div><div style="left:4%;top:64%;width:92%;height:50%;background:#e6ecf6;border-radius:40% 40% 0 0;"></div><div style="left:42%;top:56%;width:16%;height:46%;background:#a9bfe0;"></div></div>
<span style="left:1281.5px;top:719.15px;font-size:13.5px;line-height:16.2px;font-weight:400;color:#333;-webkit-text-stroke:0.47px #333;transform:scaleX(1.0479);transform-origin:0 50%;">No start date</span>
<span style="left:1391.5px;top:719.15px;font-size:13.5px;line-height:16.2px;font-weight:400;color:#333;-webkit-text-stroke:0.47px #333;transform:scaleX(1.0059);transform-origin:0 50%;">No due date</span>
<span style="left:1501.5px;top:719.15px;font-size:13.5px;line-height:16.2px;font-weight:400;color:#333;-webkit-text-stroke:0.47px #333;transform:scaleX(1.0456);transform-origin:0 50%;">Normal</span>
<svg style="left:1613.25px;top:716.5px;" width="21.5" height="21.5" viewBox="0 0 20 20"><circle cx="10" cy="10" r="8.8" fill="none" stroke="#646464" stroke-width="1.15"/><circle cx="5.8" cy="10" r="1.2" fill="#505050"/><circle cx="10" cy="10" r="1.2" fill="#505050"/><circle cx="14.2" cy="10" r="1.2" fill="#505050"/></svg>
<div style="left:278.25px;top:795.38px;width:1364.25px;height:1.12px;background:#dcdcdc;"></div>
<div style="left:288.5px;top:762.5px;width:13.25px;height:13.25px;border:1.55px solid #5a5a5a;border-radius:1.75px;background:#fff;"></div>
<span style="left:312.5px;top:763.35px;font-size:14.0px;line-height:16.8px;font-weight:400;color:#333;">15.3</span>
<div style="left:410.75px;top:763.75px;width:17.0px;height:17.0px;background:#1560AE;border-radius:50%;"></div>
<svg style="left:413.5px;top:766.5px;" width="11.5" height="11.5" viewBox="0 0 10 10"><path d="M1.8 5.2L4.1 7.500L8.4 2.800" fill="none" stroke="#fff" stroke-width="1.900"/></svg>
<span style="left:442.5px;top:763.7px;font-size:13.0px;line-height:15.6px;font-weight:400;color:#5a5a5a;text-decoration:line-through #505050;text-decoration-thickness:1.1px;-webkit-text-stroke:0.34px #5a5a5a;transform:scaleX(1.0316);transform-origin:0 50%;">Ancillary documents</span>
<div style="left:968.0px;top:765.75px;width:61.25px;height:17.5px;background:#3B873D;border-radius:3.0px;"></div>
<span style="left:973.25px;top:767.88px;font-size:12.5px;line-height:15.0px;font-weight:400;color:#fff;-webkit-text-stroke:0.44px #fff;transform:scaleX(0.9533);transform-origin:0 50%;">Complete</span>
<div style="left:1117.75px;top:762.5px;width:23.25px;height:25.0px;overflow:hidden;background:#eae8ed;"><div style="left:20%;top:4%;width:44%;height:46%;background:#1f1513;border-radius:48%;"></div><div style="left:40%;top:22%;width:32%;height:38%;background:#cf9f86;border-radius:40% 50% 50% 45%;"></div><div style="left:40%;top:52%;width:20%;height:26%;background:#d4a78e;"></div><div style="left:6%;top:74%;width:86%;height:40%;background:#f2b5a8;border-radius:50% 50% 0 0;"></div></div>
<span style="left:1147.0px;top:764.55px;font-size:13.25px;line-height:15.9px;font-weight:400;color:#555;transform:scaleX(0.9658);transform-origin:0 50%;">Elizabeth Gibson</span>
<span style="left:1281.5px;top:763.65px;font-size:13.5px;line-height:16.2px;font-weight:400;color:#333;-webkit-text-stroke:0.47px #333;transform:scaleX(1.0146);transform-origin:0 50%;">10 Sept 2023</span>
<span style="left:1391.5px;top:763.65px;font-size:13.5px;line-height:16.2px;font-weight:400;color:#333;-webkit-text-stroke:0.47px #333;transform:scaleX(1.0195);transform-origin:0 50%;">06 Oct 2023</span>
<span style="left:1501.5px;top:763.65px;font-size:13.5px;line-height:16.2px;font-weight:400;color:#333;-webkit-text-stroke:0.47px #333;transform:scaleX(1.0456);transform-origin:0 50%;">Normal</span>
<svg style="left:1613.25px;top:761.0px;" width="21.5" height="21.5" viewBox="0 0 20 20"><circle cx="10" cy="10" r="8.8" fill="none" stroke="#646464" stroke-width="1.15"/><circle cx="5.8" cy="10" r="1.2" fill="#505050"/><circle cx="10" cy="10" r="1.2" fill="#505050"/><circle cx="14.2" cy="10" r="1.2" fill="#505050"/></svg>
<div style="left:278.25px;top:840.38px;width:1364.25px;height:1.12px;background:#dcdcdc;"></div>
<div style="left:288.5px;top:807.25px;width:13.25px;height:13.25px;border:1.55px solid #5a5a5a;border-radius:1.75px;background:#fff;"></div>
<span style="left:312.5px;top:808.1px;font-size:14.0px;line-height:16.8px;font-weight:400;color:#333;">15.4</span>
<div style="left:410.75px;top:808.5px;width:17.0px;height:17.0px;background:#1560AE;border-radius:50%;"></div>
<svg style="left:413.5px;top:811.25px;" width="11.5" height="11.5" viewBox="0 0 10 10"><path d="M1.8 5.2L4.1 7.500L8.4 2.800" fill="none" stroke="#fff" stroke-width="1.900"/></svg>
<span style="left:442.5px;top:808.45px;font-size:13.0px;line-height:15.6px;font-weight:400;color:#5a5a5a;text-decoration:line-through #505050;text-decoration-thickness:1.1px;-webkit-text-stroke:0.34px #5a5a5a;transform:scaleX(1.0199);transform-origin:0 50%;">Ancillary documents for stock consideration</span>
<div style="left:968.0px;top:810.5px;width:61.25px;height:17.5px;background:#3B873D;border-radius:3.0px;"></div>
<span style="left:973.25px;top:812.62px;font-size:12.5px;line-height:15.0px;font-weight:400;color:#fff;-webkit-text-stroke:0.44px #fff;transform:scaleX(0.9533);transform-origin:0 50%;">Complete</span>
<div style="left:1117.75px;top:807.25px;width:22.5px;height:25.0px;overflow:hidden;background:#fbfbfc;"><div style="left:24%;top:3%;width:52%;height:28%;background:#6b4c38;border-radius:50% 50% 20% 20%;"></div><div style="left:28%;top:14%;width:44%;height:44%;background:#ddab8d;border-radius:42%;"></div><div style="left:4%;top:64%;width:92%;height:50%;background:#e6ecf6;border-radius:40% 40% 0 0;"></div><div style="left:42%;top:56%;width:16%;height:46%;background:#a9bfe0;"></div></div>
<span style="left:1147.0px;top:809.3px;font-size:13.25px;line-height:15.9px;font-weight:400;color:#555;transform:scaleX(0.9971);transform-origin:0 50%;">Harry Smith</span>
<span style="left:1281.5px;top:808.4px;font-size:13.5px;line-height:16.2px;font-weight:400;color:#333;-webkit-text-stroke:0.47px #333;transform:scaleX(1.0146);transform-origin:0 50%;">28 Sept 2023</span>
<span style="left:1391.5px;top:808.4px;font-size:13.5px;line-height:16.2px;font-weight:400;color:#333;-webkit-text-stroke:0.47px #333;transform:scaleX(1.0195);transform-origin:0 50%;">09 Oct 2023</span>
<span style="left:1501.5px;top:808.4px;font-size:13.5px;line-height:16.2px;font-weight:400;color:#333;-webkit-text-stroke:0.47px #333;transform:scaleX(1.0456);transform-origin:0 50%;">Normal</span>
<svg style="left:1613.25px;top:805.75px;" width="21.5" height="21.5" viewBox="0 0 20 20"><circle cx="10" cy="10" r="8.8" fill="none" stroke="#646464" stroke-width="1.15"/><circle cx="5.8" cy="10" r="1.2" fill="#505050"/><circle cx="10" cy="10" r="1.2" fill="#505050"/><circle cx="14.2" cy="10" r="1.2" fill="#505050"/></svg>
<div style="left:278.25px;top:840.25px;width:1364.25px;height:45.5px;background:#F3F3F3;"></div>
<div style="left:278.25px;top:885.88px;width:1364.25px;height:1.12px;background:#dcdcdc;"></div>
<div style="left:278.25px;top:840.38px;width:1364.25px;height:1.12px;background:#dcdcdc;"></div>
<span style="left:312.5px;top:854.05px;font-size:14.5px;line-height:17.4px;font-weight:400;color:#333;">16</span>
<svg style="left:364.5px;top:860.0px;" width="11.75" height="6.5" viewBox="0 0 10 6"><path d="M0 0H10L5 6Z" fill="#444"/></svg>
<span style="left:389.0px;top:854.33px;font-size:15.5px;line-height:18.6px;font-weight:400;color:#444;transform:scaleX(0.9735);transform-origin:0 50%;">Cooperate on buyer&#x27;s securities filings</span>
<div style="left:849.0px;top:857.38px;width:72.0px;height:11.75px;background:#fff;border-radius:3.25px;"></div>
<div style="left:849.0px;top:857.38px;width:36.0px;height:11.75px;background:#2B7B2C;border-radius:3.25px;"></div>
<span style="left:932.75px;top:856.7px;font-size:11.75px;line-height:14.1px;font-weight:400;color:#3c3c3c;transform:scaleX(0.8393);transform-origin:0 50%;">50%</span>
<svg style="left:1613.25px;top:850.75px;" width="21.5" height="21.5" viewBox="0 0 20 20"><circle cx="10" cy="10" r="8.8" fill="none" stroke="#646464" stroke-width="1.15"/><circle cx="5.8" cy="10" r="1.2" fill="#505050"/><circle cx="10" cy="10" r="1.2" fill="#505050"/><circle cx="14.2" cy="10" r="1.2" fill="#505050"/></svg>
<div style="left:278.25px;top:930.12px;width:1364.25px;height:1.12px;background:#dcdcdc;"></div>
<div style="left:288.5px;top:897.38px;width:13.25px;height:13.25px;border:1.55px solid #5a5a5a;border-radius:1.75px;background:#fff;"></div>
<span style="left:312.5px;top:898.22px;font-size:14.0px;line-height:16.8px;font-weight:400;color:#333;">16.1</span>
<div style="left:410.75px;top:898.62px;width:17.0px;height:17.0px;background:#1560AE;border-radius:50%;"></div>
<svg style="left:413.5px;top:901.37px;" width="11.5" height="11.5" viewBox="0 0 10 10"><path d="M1.8 5.2L4.1 7.500L8.4 2.800" fill="none" stroke="#fff" stroke-width="1.900"/></svg>
<span style="left:442.5px;top:898.57px;font-size:13.0px;line-height:15.6px;font-weight:400;color:#5a5a5a;text-decoration:line-through #505050;text-decoration-thickness:1.1px;-webkit-text-stroke:0.34px #5a5a5a;transform:scaleX(1.0168);transform-origin:0 50%;">Public disclosure requirements</span>
<div style="left:968.0px;top:900.62px;width:61.25px;height:17.5px;background:#3B873D;border-radius:3.0px;"></div>
<span style="left:973.25px;top:902.75px;font-size:12.5px;line-height:15.0px;font-weight:400;color:#fff;-webkit-text-stroke:0.44px #fff;transform:scaleX(0.9533);transform-origin:0 50%;">Complete</span>
<div style="left:1117.75px;top:897.38px;width:23.25px;height:25.0px;overflow:hidden;background:#eae8ed;"><div style="left:20%;top:4%;width:44%;height:46%;background:#1f1513;border-radius:48%;"></div><div style="left:40%;top:22%;width:32%;height:38%;background:#cf9f86;border-radius:40% 50% 50% 45%;"></div><div style="left:40%;top:52%;width:20%;height:26%;background:#d4a78e;"></div><div style="left:6%;top:74%;width:86%;height:40%;background:#f2b5a8;border-radius:50% 50% 0 0;"></div></div>
<span style="left:1147.0px;top:899.42px;font-size:13.25px;line-height:15.9px;font-weight:400;color:#555;transform:scaleX(0.9658);transform-origin:0 50%;">Elizabeth Gibson</span>
<span style="left:1281.5px;top:898.52px;font-size:13.5px;line-height:16.2px;font-weight:400;color:#333;-webkit-text-stroke:0.47px #333;transform:scaleX(1.0263);transform-origin:0 50%;">08 Oct 2023</span>
<span style="left:1391.5px;top:898.52px;font-size:13.5px;line-height:16.2px;font-weight:400;color:#333;-webkit-text-stroke:0.47px #333;transform:scaleX(1.0195);transform-origin:0 50%;">17 Oct 2023</span>
<span style="left:1501.5px;top:898.52px;font-size:13.5px;line-height:16.2px;font-weight:400;color:#333;-webkit-text-stroke:0.47px #333;transform:scaleX(1.0456);transform-origin:0 50%;">Normal</span>
<svg style="left:1613.25px;top:895.87px;" width="21.5" height="21.5" viewBox="0 0 20 20"><circle cx="10" cy="10" r="8.8" fill="none" stroke="#646464" stroke-width="1.15"/><circle cx="5.8" cy="10" r="1.2" fill="#505050"/><circle cx="10" cy="10" r="1.2" fill="#505050"/><circle cx="14.2" cy="10" r="1.2" fill="#505050"/></svg>
<div style="left:288.5px;top:941.75px;width:13.25px;height:13.25px;border:1.55px solid #5a5a5a;border-radius:1.75px;background:#fff;"></div>
<span style="left:312.5px;top:942.6px;font-size:14.0px;line-height:16.8px;font-weight:400;color:#333;">16.2</span>
<div style="left:410.5px;top:942.5px;width:17.0px;height:17.0px;border:1.38px solid #7c7c7c;border-radius:50%;background:#fff;"></div>
<span style="left:442.5px;top:942.95px;font-size:13.0px;line-height:15.6px;font-weight:400;color:#D6252B;-webkit-text-stroke:0.46px #D6252B;transform:scaleX(1.0051);transform-origin:0 50%;">Filings and disclosure for stock consideration</span>
<div style="left:968.0px;top:945.0px;width:69.5px;height:17.5px;background:#DFA03E;border-radius:3.0px;"></div>
<span style="left:973.25px;top:947.12px;font-size:12.5px;line-height:15.0px;font-weight:400;color:#fff;-webkit-text-stroke:0.44px #fff;transform:scaleX(0.9395);transform-origin:0 50%;">In progress</span>
<div style="left:1117.75px;top:941.75px;width:23.25px;height:25.0px;overflow:hidden;background:#eae8ed;"><div style="left:20%;top:4%;width:44%;height:46%;background:#1f1513;border-radius:48%;"></div><div style="left:40%;top:22%;width:32%;height:38%;background:#cf9f86;border-radius:40% 50% 50% 45%;"></div><div style="left:40%;top:52%;width:20%;height:26%;background:#d4a78e;"></div><div style="left:6%;top:74%;width:86%;height:40%;background:#f2b5a8;border-radius:50% 50% 0 0;"></div></div>
<span style="left:1147.0px;top:943.8px;font-size:13.25px;line-height:15.9px;font-weight:400;color:#555;transform:scaleX(0.9658);transform-origin:0 50%;">Elizabeth Gibson</span>
<span style="left:1281.5px;top:942.9px;font-size:13.5px;line-height:16.2px;font-weight:400;color:#333;-webkit-text-stroke:0.47px #333;transform:scaleX(1.0263);transform-origin:0 50%;">22 Oct 2023</span>
<span style="left:1391.5px;top:942.9px;font-size:13.5px;line-height:16.2px;font-weight:400;color:#333;-webkit-text-stroke:0.47px #333;transform:scaleX(1.0195);transform-origin:0 50%;">27 Oct 2023</span>
<span style="left:1501.5px;top:942.9px;font-size:13.5px;line-height:16.2px;font-weight:400;color:#333;-webkit-text-stroke:0.47px #333;transform:scaleX(1.0456);transform-origin:0 50%;">Normal</span>
<svg style="left:1613.25px;top:940.25px;" width="21.5" height="21.5" viewBox="0 0 20 20"><circle cx="10" cy="10" r="8.8" fill="none" stroke="#646464" stroke-width="1.15"/><circle cx="5.8" cy="10" r="1.2" fill="#505050"/><circle cx="10" cy="10" r="1.2" fill="#505050"/><circle cx="14.2" cy="10" r="1.2" fill="#505050"/></svg>
<div style="left:0.0px;top:998.75px;width:1920.0px;height:81.5px;background:#F1F1F1;"></div>
<div style="left:0.0px;top:998.5px;width:1920.0px;height:2.75px;background:#e6e6e6;"></div>
<div style="left:877.0px;top:1015.0px;width:25.0px;height:24.25px;background:radial-gradient(circle at 45% 50%,#fde3cf 0,#f8b586 30%,#F39654 62%,#F18C45 100%);border-radius:50%;"></div>
<svg style="left:881.5px;top:1019.0px;" width="16.0" height="16.0" viewBox="0 0 20 20"><path d="M10 10C13 6 17 9 15 13M10 10C6 8 6 3 11 3M10 10C9 14 4 15 3 11" fill="none" stroke="#fff" stroke-width="1.8" opacity="0.75"/></svg>
<span style="left:907.75px;top:1019.85px;font-size:12.75px;line-height:15.3px;font-weight:700;color:#333;transform:scaleX(1.0221);transform-origin:0 50%;">THOMSON REUTERS</span>
<span style="left:1040.75px;top:1021.5px;font-size:5.0px;line-height:6.0px;font-weight:400;color:#333;">®</span>
<span style="left:703.0px;top:1052.15px;font-size:9.75px;line-height:11.7px;font-weight:400;color:#3c3c3c;-webkit-text-stroke:0.18px #3c3c3c;transform:scaleX(1.0358);transform-origin:0 50%;">© 2024 Thomson Reuters | Thomson Reuters Privacy Statement | Terms of Use | Help |  Contact us | GDPR contact</span>
<div style="left:1874.75px;top:1021.75px;width:34.5px;height:34.75px;background:#0C5DAE;border-radius:50%;"></div>
<span style="left:1885.0px;top:1022.75px;font-size:28.75px;line-height:34.5px;font-weight:700;color:#fff;transform:scaleX(0.7402);transform-origin:0 50%;">?</span>
<div style="left:1896.5px;top:1045.0px;width:26.5px;height:17.0px;background:#0C5DAE;border-radius:8.5px;"></div>
<span style="left:1904.25px;top:1048.6px;font-size:9.0px;line-height:10.8px;font-weight:700;color:#fff;transform:scaleX(1.0733);transform-origin:0 50%;">13</span>
</div></body></html>
